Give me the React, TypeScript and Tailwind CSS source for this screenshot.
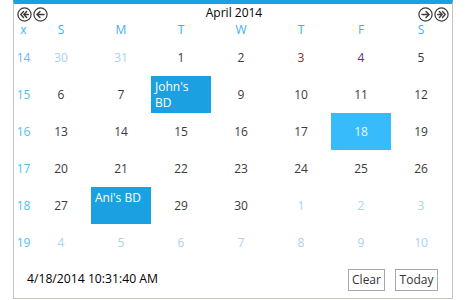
import React from "react";

type Day = { n: number; kind: "cur" | "other"; color?: string };

const weeks: { wk: number; days: Day[] }[] = [
  { wk: 14, days: [{ n: 30, kind: "other" }, { n: 31, kind: "other" }, { n: 1, kind: "cur" }, { n: 2, kind: "cur" }, { n: 3, kind: "cur", color: "text-[#8a2a2a]" }, { n: 4, kind: "cur", color: "text-[#6b2a7a]" }, { n: 5, kind: "cur" }] },
  { wk: 15, days: [6, 7, 8, 9, 10, 11, 12].map((n) => ({ n, kind: "cur" as const })) },
  { wk: 16, days: [13, 14, 15, 16, 17, 18, 19].map((n) => ({ n, kind: "cur" as const })) },
  { wk: 17, days: [20, 21, 22, 23, 24, 25, 26].map((n) => ({ n, kind: "cur" as const })) },
  { wk: 18, days: [{ n: 27, kind: "cur" }, { n: 28, kind: "cur" }, { n: 29, kind: "cur" }, { n: 30, kind: "cur" }, { n: 1, kind: "other" }, { n: 2, kind: "other" }, { n: 3, kind: "other" }] },
  { wk: 19, days: [4, 5, 6, 7, 8, 9, 10].map((n) => ({ n, kind: "other" as const })) },
];

const events: Record<string, string> = {
  "15-2": "John's\nBD",
  "18-1": "Ani's BD",
};

const NavIcon = ({ dir, dbl }: { dir: "l" | "r"; dbl?: boolean }) => (
  <svg width="15" height="15" viewBox="0 0 15 15" className="block">
    <circle cx="7.5" cy="7.5" r="6.6" fill="none" stroke="#3a3a3a" strokeWidth="1.2" />
    <g transform={dir === "r" ? "translate(15,0) scale(-1,1)" : undefined} fill="none" stroke="#3a3a3a" strokeWidth="1.4" strokeLinecap="round" strokeLinejoin="round">
      {dbl ? (
        <>
          <path d="M6.5 4.6 L3.8 7.5 L6.5 10.4" />
          <path d="M9.6 4.6 L6.9 7.5 L9.6 10.4" />
          <path d="M7.2 7.5 H11.3" />
        </>
      ) : (
        <>
          <path d="M7 4.4 L4 7.5 L7 10.6" />
          <path d="M4.3 7.5 H11" />
        </>
      )}
    </g>
  </svg>
);

export default function App() {
  return (
    <div className="w-[470px] h-[300px] bg-white overflow-hidden" style={{ fontFamily: "'Open Sans', 'Noto Sans', sans-serif" }}>
      <div className="ml-[13px] w-[440px] h-[299px] border-t-4 border-t-[#1ba1e2] border-x border-b border-x-[#c4c4b8] border-b-[#c4c4b8] flex flex-col">
        {/* header */}
        <div className="h-[16px] flex items-center justify-between px-[3px]">
          <div className="flex gap-[1px] mt-[4px]">
            <NavIcon dir="l" dbl />
            <NavIcon dir="l" />
          </div>
          <div className="text-[12px] leading-none text-black mt-[2px] ml-[2px]">April 2014</div>
          <div className="flex gap-[1px] mt-[4px]">
            <NavIcon dir="r" />
            <NavIcon dir="r" dbl />
          </div>
        </div>
        {/* day names */}
        <div className="h-[19px] flex items-center text-[12px] text-[#3fb1f2]">
          <div className="w-[17px] text-center pl-[2px]">x</div>
          {["S", "M", "T", "W", "T", "F", "S"].map((d, i) => (
            <div key={i} className="w-[60px] text-center">{d}</div>
          ))}
        </div>
        {/* weeks */}
        {weeks.map((w) => (
          <div key={w.wk} className="h-[37px] flex text-[12px]">
            <div className="w-[17px] flex items-center justify-center text-[#56bdf5] pl-[2px]">{w.wk}</div>
            {w.days.map((d, i) => {
              const ev = events[`${w.wk}-${i}`];
              const selected = w.wk === 16 && i === 5;
              if (ev) {
                return (
                  <div key={i} className="w-[60px] bg-[#1ba1e2] text-white text-[12px] leading-[16px] px-[4px] pt-[3px] whitespace-pre-line">
                    {ev}
                  </div>
                );
              }
              return (
                <div
                  key={i}
                  className={
                    "w-[60px] flex items-center justify-center " +
                    (selected
                      ? "bg-[#37bbfb] text-[#eaf6ff]"
                      : d.kind === "other"
                      ? "text-[#a9d3f0]"
                      : d.color ?? "text-[#3a3a3a]")
                  }
                >
                  {d.n}
                </div>
              );
            })}
          </div>
        ))}
        {/* footer */}
        <div className="flex-1 flex items-center justify-between pl-[13px] pr-[14px]">
          <div className="text-[12.2px] text-black">4/18/2014 10:31:40 AM</div>
          <div className="flex gap-[10px]">
            <button className="h-[22px] w-[37px] border border-[#a8a8a8] text-[12px] text-[#333] leading-none">Clear</button>
            <button className="h-[22px] w-[43px] border border-[#a8a8a8] text-[12px] text-[#333] leading-none">Today</button>
          </div>
        </div>
      </div>
    </div>
  );
}
